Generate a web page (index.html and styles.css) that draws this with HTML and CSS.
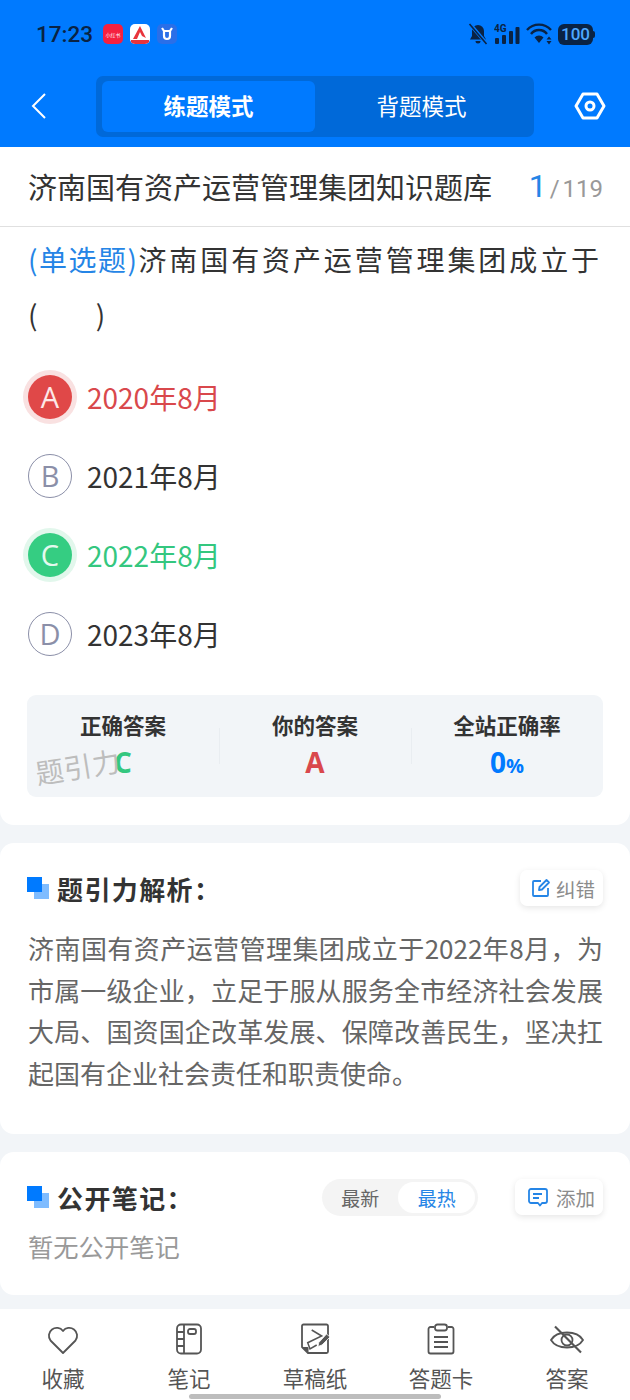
FILE: index.html
```html
<!DOCTYPE html>
<html lang="zh-CN">
<head>
    <meta charset="UTF-8">
    <meta name="viewport" content="width=device-width, initial-scale=1.0">
    <title>练题模式</title>
    <link rel="stylesheet" href="styles.css">
</head>
<body>
    <header class="top">
        <div class="status">
            <span class="time">17:23</span>
            <span class="app app-red">小红书</span>
            <span class="app app-white">
                <svg width="20" height="20" viewBox="0 0 20 20"><path d="M10 2 L16 14 L12 12 L10 8 L7 15 L3 15 Z" fill="#e8343c"/><rect x="1" y="16" width="18" height="4" fill="#e8343c"/></svg>
            </span>
            <span class="app app-blue">
                <svg width="20" height="20" viewBox="0 0 20 20"><path d="M5 4 L7 7 V12 A3 3 0 0 0 13 12 V7 L15 4 M7 7 H13" fill="none" stroke="#fff" stroke-width="2.200"/></svg>
            </span>
            <span class="status-right">
                <svg width="20" height="22" viewBox="0 0 20 22"><path d="M10 2 A6 6 0 0 1 16 8 V13 L18 16.500 H2 L4 13 V8 A6 6 0 0 1 10 2 Z M7.500 18 H12.500 A2.500 2.500 0 0 1 7.500 18 Z" fill="#0a2344"/><path d="M2 1 L19 21" stroke="#007aff" stroke-width="3.600"/><path d="M1.500 1 L18.500 21" stroke="#0a2344" stroke-width="1.600"/></svg>
                <svg width="26" height="22" viewBox="0 0 26 22"><rect x="1" y="15" width="4" height="6" rx="1" fill="#0a2344"/><rect x="8" y="12" width="4" height="9" rx="1" fill="#0a2344"/><rect x="15" y="8" width="4" height="13" rx="1" fill="#0a2344"/><rect x="21.500" y="4" width="4" height="17" rx="1" fill="#0a2344"/><text x="0" y="9" class="net">4G</text></svg>
                <svg width="26" height="22" viewBox="0 0 26 22"><path d="M1 7 A16 16 0 0 1 25 7 M5 11 A10 10 0 0 1 21 11" fill="none" stroke="#0a2344" stroke-width="2.400"/><path d="M8.500 14.500 A6 6 0 0 1 17.500 14.500 L13 20 Z" fill="#0a2344"/><path d="M23 13.500 L25.500 16.500 H20.500 Z M23 21.500 L25.500 18 H20.500 Z" fill="#0a2344"/></svg>
                <span class="battery">100</span>
            </span>
        </div>
        <div class="bar">
            <svg class="back" width="18" height="28" viewBox="0 0 18 28"><path d="M15 2 L3 14 L15 26" fill="none" stroke="#fff" stroke-width="2"/></svg>
            <div class="modes">
                <div class="mode mode-on">练题模式</div>
                <div class="mode">背题模式</div>
            </div>
            <svg class="gear" width="32" height="28" viewBox="0 0 32 28"><path d="M9 2 H23 L30 14 L23 26 H9 L2 14 Z" fill="none" stroke="#fff" stroke-width="3" stroke-linejoin="round"/><circle cx="16" cy="14" r="4" fill="none" stroke="#fff" stroke-width="3"/></svg>
        </div>
    </header>

    <section class="card card-question">
        <div class="title-row">
            <span class="title">济南国有资产运营管理集团知识题库</span>
            <span class="count"><b>1</b><i>/</i>119</span>
        </div>
        <p class="stem"><span class="kind">(单选题)</span>济南国有资产运营管理集团成立于<br><span class="blank">(　　)</span></p>
        <ul class="options">
            <li class="option wrong"><span class="letter">A</span>2020年8月</li>
            <li class="option"><span class="letter">B</span>2021年8月</li>
            <li class="option right"><span class="letter">C</span>2022年8月</li>
            <li class="option"><span class="letter">D</span>2023年8月</li>
        </ul>
        <div class="stats">
            <div class="stat">
                <div class="stat-name">正确答案</div>
                <div class="stat-value green">C</div>
                <span class="mark">题引力</span>
            </div>
            <div class="stat">
                <div class="stat-name">你的答案</div>
                <div class="stat-value red">A</div>
            </div>
            <div class="stat">
                <div class="stat-name">全站正确率</div>
                <div class="stat-value blue">0<small>%</small></div>
            </div>
        </div>
    </section>

    <section class="card card-analysis">
        <div class="head">
            <span class="squares"></span>
            <h2>题引力解析：</h2>
            <span class="tool">
                <svg width="20" height="20" viewBox="0 0 20 20"><path d="M10 3 H3 A1 1 0 0 0 2 4 V17 A1 1 0 0 0 3 18 H16 A1 1 0 0 0 17 17 V10" fill="none" stroke="#2585e6" stroke-width="1.8"/><path d="M8 12 L8.500 9 L15.500 2 L18 4.500 L11 11.500 Z" fill="none" stroke="#2585e6" stroke-width="1.8" stroke-linejoin="round"/></svg>
                纠错
            </span>
        </div>
        <p class="body-text">济南国有资产运营管理集团成立于2022年8月，为市属一级企业，立足于服从服务全市经济社会发展大局、国资国企改革发展、保障改善民生，坚决扛起国有企业社会责任和职责使命。</p>
    </section>

    <section class="card card-notes">
        <div class="head">
            <span class="squares"></span>
            <h2>公开笔记：</h2>
            <div class="sort">
                <span>最新</span>
                <span class="sort-on">最热</span>
            </div>
            <span class="tool">
                <svg width="20" height="20" viewBox="0 0 20 20"><path d="M3 2 H17 A2 2 0 0 1 19 4 V14 A2 2 0 0 1 17 16 H14 L12 18.500 L10 16 H3 A2 2 0 0 1 1 14 V4 A2 2 0 0 1 3 2 Z" fill="none" stroke="#2585e6" stroke-width="1.8" stroke-linejoin="round"/><path d="M5 7 H14 M5 11 H11" stroke="#2585e6" stroke-width="1.8"/></svg>
                添加
            </span>
        </div>
        <p class="empty">暂无公开笔记</p>
    </section>

    <nav class="tabs">
        <div class="tab">
            <svg width="34" height="32" viewBox="0 0 34 32"><path d="M17 30 L4.500 17.500 A7.500 7.500 0 0 1 17 8 A7.500 7.500 0 0 1 29.500 17.500 Z" fill="none" stroke="#555" stroke-width="1.800" stroke-linejoin="round"/></svg>
            收藏
        </div>
        <div class="tab">
            <svg width="34" height="32" viewBox="0 0 34 32"><rect x="5" y="1.500" width="24" height="29" rx="4" fill="none" stroke="#555" stroke-width="1.800"/><path d="M12 2 V30 M5 9 H12 M5 16 H12 M5 23 H12" stroke="#555" stroke-width="1.800"/><rect x="16" y="6" width="8" height="5" rx="2" fill="none" stroke="#555" stroke-width="1.800"/></svg>
            笔记
        </div>
        <div class="tab">
            <svg width="34" height="32" viewBox="0 0 34 32"><path d="M10 30 H28.500 A1.500 1.500 0 0 0 30 28.500 V3 A1.500 1.500 0 0 0 28.500 1.500 H5.500 A1.500 1.500 0 0 0 4 3 V24 Z" fill="none" stroke="#555" stroke-width="1.800" stroke-linejoin="round"/><path d="M4 24 H9.500 A1 1 0 0 1 10.500 25 V30 Z" fill="#555"/><path d="M13.700 7 L23.700 13 L9.700 19.700 L12 26 L18.700 22" fill="none" stroke="#555" stroke-width="1.500"/><path d="M20 23.500 L20.800 19.500 L28.500 11 L32 14 L24 22 Z" fill="#555" stroke="#fff" stroke-width="0.800"/></svg>
            草稿纸
        </div>
        <div class="tab">
            <svg width="34" height="32" viewBox="0 0 34 32"><path d="M10 4 H6.500 A2 2 0 0 0 4.500 6 V28.500 A2 2 0 0 0 6.500 30.500 H27.500 A2 2 0 0 0 29.500 28.500 V6 A2 2 0 0 0 27.500 4 H24" fill="none" stroke="#555" stroke-width="1.800"/><rect x="11" y="1.500" width="12" height="6" rx="2.500" fill="none" stroke="#555" stroke-width="1.800"/><path d="M10 14 H24 M10 19 H24 M10 24 H24" stroke="#555" stroke-width="1.800"/></svg>
            答题卡
        </div>
        <div class="tab">
            <svg width="34" height="32" viewBox="0 0 34 32"><path d="M1 17 C7 7 27 7 33 17 C27 27 7 27 1 17 Z" fill="none" stroke="#555" stroke-width="1.800"/><circle cx="17" cy="17" r="5.500" fill="none" stroke="#555" stroke-width="1.800"/><path d="M5 3.500 L31 29.500" stroke="#555" stroke-width="2.200"/></svg>
            答案
        </div>
        <span class="home-line"></span>
    </nav>
</body>
</html>
```

FILE: styles.css
```css
* {
    box-sizing: border-box;
}
body {
    margin: 0;
    height: 1400px;
    overflow: hidden;
    background-color: #f2f5f8;
    font-family: "Noto Sans CJK SC", "Noto Sans", sans-serif;
    color: #333;
    display: flex;
    flex-direction: column;
}
.top {
    background-color: #007aff;
    height: 147px;
    padding-top: 21px;
}
.status {
    display: flex;
    align-items: center;
    height: 26px;
    padding: 0 35px 0 36px;
}
.time {
    font-family: Roboto, sans-serif;
    font-size: 22.500px;
    font-weight: 500;
    color: #0a2344;
    margin-right: 10px;
}
.app {
    width: 20px;
    height: 20px;
    border-radius: 5px;
    margin-right: 7px;
    overflow: hidden;
    display: flex;
    align-items: center;
    justify-content: center;
}
.app-red {
    background-color: #f5203f;
    color: #fff;
    font-size: 5px;
    white-space: nowrap;
}
.app-white {
    background-color: #fff;
}
.app-blue {
    background-color: #2a6fe8;
}
.status-right {
    margin-left: auto;
    display: flex;
    align-items: center;
    gap: 6px;
}
.net {
    font-family: Roboto, sans-serif;
    font-size: 10px;
    font-weight: 700;
    fill: #0a2344;
}
.battery {
    position: relative;
    background-color: #0a2344;
    color: #4ea8ff;
    font-family: Roboto, sans-serif;
    font-size: 17px;
    font-weight: 500;
    line-height: 21px;
    height: 21px;
    width: 35px;
    margin-right: 2px;
    text-align: center;
    border-radius: 6px;
}
.battery::after {
    content: "";
    position: absolute;
    right: -2px;
    top: 7px;
    width: 2px;
    height: 7px;
    background-color: #0a2344;
    border-radius: 0 2px 2px 0;
}
.bar {
    display: flex;
    align-items: center;
    height: 62px;
    margin-top: 28px;
    padding: 0 24px 0 30px;
}
.back {
    margin-right: 48px;
}
.modes {
    width: 438px;
    height: 61px;
    padding: 5px 6px;
    background-color: #0069d9;
    border-radius: 7px;
    display: flex;
}
.mode {
    flex: 1;
    display: flex;
    align-items: center;
    justify-content: center;
    color: #fff;
    font-size: 22.500px;
    padding-bottom: 3px;
    border-radius: 6px;
}
.mode-on {
    background-color: #007aff;
    font-weight: 700;
}
.gear {
    margin-left: auto;
}
.card {
    background-color: #fff;
    margin-bottom: 18px;
}
.card-question {
    height: 678px;
    border-radius: 0 0 14px 14px;
    margin-bottom: 18px;
}
.title-row {
    height: 80px;
    border-bottom: 1px solid #e0e0e0;
    display: flex;
    align-items: center;
    justify-content: space-between;
    padding: 0 27px 2px 28px;
}
.title {
    font-size: 29px;
    white-space: nowrap;
}
.count {
    font-family: Roboto, sans-serif;
    font-size: 24px;
    color: #999;
}
.count b {
    font-size: 32px;
    font-weight: 400;
    color: #2585e6;
}
.count i {
    font-style: normal;
    margin: 0 3px;
}
.stem {
    margin: 5px 20px 0 28px;
    font-size: 28px;
    line-height: 55px;
    letter-spacing: 2.900px;
    white-space: nowrap;
}
.kind {
    color: #2585e6;
    letter-spacing: 1.500px;
}
.blank {
    letter-spacing: 0.800px;
}
.options {
    list-style: none;
    margin: 15px 0 0;
    padding: 0 0 0 28px;
}
.option {
    display: flex;
    align-items: center;
    height: 79px;
    font-size: 28px;
    color: #333;
}
.letter {
    width: 44px;
    height: 44px;
    border: 1px solid #8b8fa8;
    border-radius: 50%;
    margin-right: 15px;
    display: flex;
    align-items: center;
    justify-content: center;
    font-family: "Open Sans", sans-serif;
    font-size: 29px;
    color: #8b8fa8;
}
.wrong {
    color: #d9484c;
}
.wrong .letter {
    background-color: #e04848;
    border: 0;
    color: #fde8e8;
    box-shadow: 0 0 0 5px #f9e1e1;
}
.right {
    color: #34c77f;
}
.right .letter {
    background-color: #35cd82;
    border: 0;
    color: #e4f9ee;
    box-shadow: 0 0 0 5px #e2f7ec;
}
.stats {
    margin: 22px 27px 0;
    height: 102px;
    background-color: #f2f5f8;
    border-radius: 9px;
    display: grid;
    grid-template-columns: repeat(3, 1fr);
    padding-top: 15px;
}
.stat {
    position: relative;
    text-align: center;
}
.stat + .stat::before {
    content: "";
    position: absolute;
    left: 0;
    top: 18px;
    height: 36px;
    border-left: 1px solid #e9edf1;
}
.stat-name {
    font-size: 21.500px;
    font-weight: 700;
    line-height: 30px;
}
.stat-value {
    font-family: "Open Sans", sans-serif;
    font-size: 28px;
    font-weight: 700;
    line-height: 40px;
    margin-top: 2px;
}
.stat-value small {
    font-size: 20px;
}
.green {
    color: #34c77f;
}
.red {
    color: #d9484c;
}
.blue {
    color: #007aff;
}
/* watermark sits over the first column */
.mark {
    position: absolute;
    left: 8px;
    top: 36px;
    font-size: 28px;
    letter-spacing: 0.500px;
    color: #bdbdbd;
    transform: rotate(-9deg);
    white-space: nowrap;
}
.card-analysis {
    height: 291px;
    border-radius: 14px;
}
.card-notes {
    height: 143px;
    border-radius: 14px;
    margin-bottom: 14px;
}
.head {
    display: flex;
    align-items: center;
    height: 36px;
    padding: 0 27px;
    margin-top: 27px;
}
.squares {
    width: 22px;
    height: 22px;
    margin-right: 8px;
    background: linear-gradient(#007aff, #007aff) 0 0 / 15px 15px no-repeat, linear-gradient(#7fbcff, #7fbcff) 7px 7px / 15px 15px no-repeat;
}
.head h2 {
    margin: 0;
    font-size: 26px;
    font-weight: 700;
    letter-spacing: 1.400px;
}
.tool {
    margin-left: auto;
    height: 36px;
    padding: 0 8px 0 11px;
    display: flex;
    align-items: center;
    gap: 5px;
    background-color: #fff;
    border-radius: 7px;
    box-shadow: 0 2px 6px rgba(0, 0, 0, 0.1);
    font-size: 19.500px;
    color: #8c8c8c;
}
.body-text {
    margin: 21px 27px 0 28px;
    font-size: 26px;
    line-height: 41.700px;
    color: #666;
    text-align: justify;
}
.sort {
    margin-left: auto;
    width: 156px;
    height: 37px;
    background-color: #f4f4f4;
    border-radius: 19px;
    display: flex;
    align-items: center;
    font-size: 19px;
    color: #666;
    padding: 3px 3px 3px 0;
}
.sort span {
    flex: 1;
    text-align: center;
}
.sort-on {
    background-color: #fff;
    color: #2585e6;
    height: 31px;
    line-height: 31px;
    border-radius: 16px;
}
.sort + .tool {
    margin-left: 37px;
    padding-left: 13px;
    gap: 8px;
}
.empty {
    margin: 11px 28px 0;
    font-size: 25.300px;
    line-height: 40px;
    color: #999;
}
.tabs {
    position: relative;
    flex: 1;
    background-color: #fff;
    display: flex;
    padding: 14px 0 0;
}
.tab {
    flex: 1;
    display: flex;
    flex-direction: column;
    align-items: center;
    font-size: 21.500px;
    line-height: 30px;
    color: #555;
    gap: 8px;
}
/* gesture pill over the tab labels */
.home-line {
    position: absolute;
    left: 189px;
    right: 189px;
    bottom: 1px;
    height: 5px;
    border-radius: 3px;
    background-color: #bdbdbd;
}
```
